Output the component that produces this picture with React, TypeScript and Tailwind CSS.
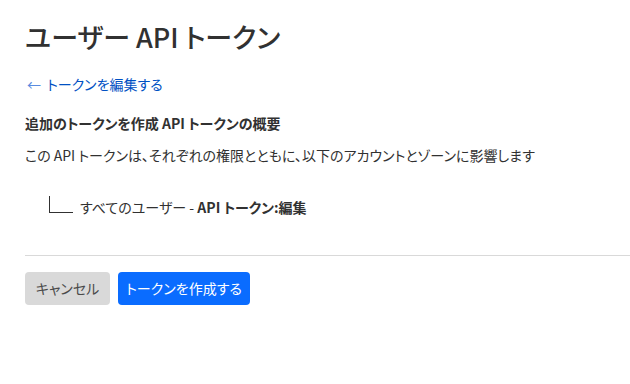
export default function App() {
  return (
    <div
      className="min-h-screen bg-white text-[#313131] pl-[25px] pt-[16px] [font-feature-settings:'palt']"
      style={{ fontFamily: '"Noto Sans CJK JP", "Noto Sans", sans-serif' }}
    >
      <h1 className="text-[27px] leading-[42px] font-medium">ユーザー API トークン</h1>

      <a href="#" className="mt-[16px] ml-[2px] flex items-center gap-[6px] text-[14px] leading-[20px] text-[#0051c3]">
        <span className="text-[#5a8be0]">←</span>
        トークンを編集する
      </a>

      <h2 className="mt-[19px] text-[14px] leading-[20px] font-bold">追加のトークンを作成 API トークンの概要</h2>
      <p className="mt-[12px] text-[14px] leading-[20px]">
        この API トークンは、それぞれの権限とともに、以下のアカウントとゾーンに影響します
      </p>

      <div className="mt-[31px] ml-[24px] flex items-end gap-[7px]">
        <div className="w-[24px] h-[17px] border-l border-b border-[#313131] mb-[4px]" />
        <span className="text-[14px] leading-[20px]">
          すべてのユーザー - <span className="font-bold">API トークン:編集</span>
        </span>
      </div>

      <div className="mt-[38px] border-t border-[#d9d9d9]" />

      <div className="mt-[16px] flex gap-[8px]">
        <button className="h-[33px] w-[85px] rounded-[4px] bg-[#d9d9d9] text-[14px] text-[#4a4a4a]">
          キャンセル
        </button>
        <button className="h-[33px] w-[132px] rounded-[4px] bg-[#0a6cff] text-[14px] text-white">
          トークンを作成する
        </button>
      </div>
    </div>
  );
}
